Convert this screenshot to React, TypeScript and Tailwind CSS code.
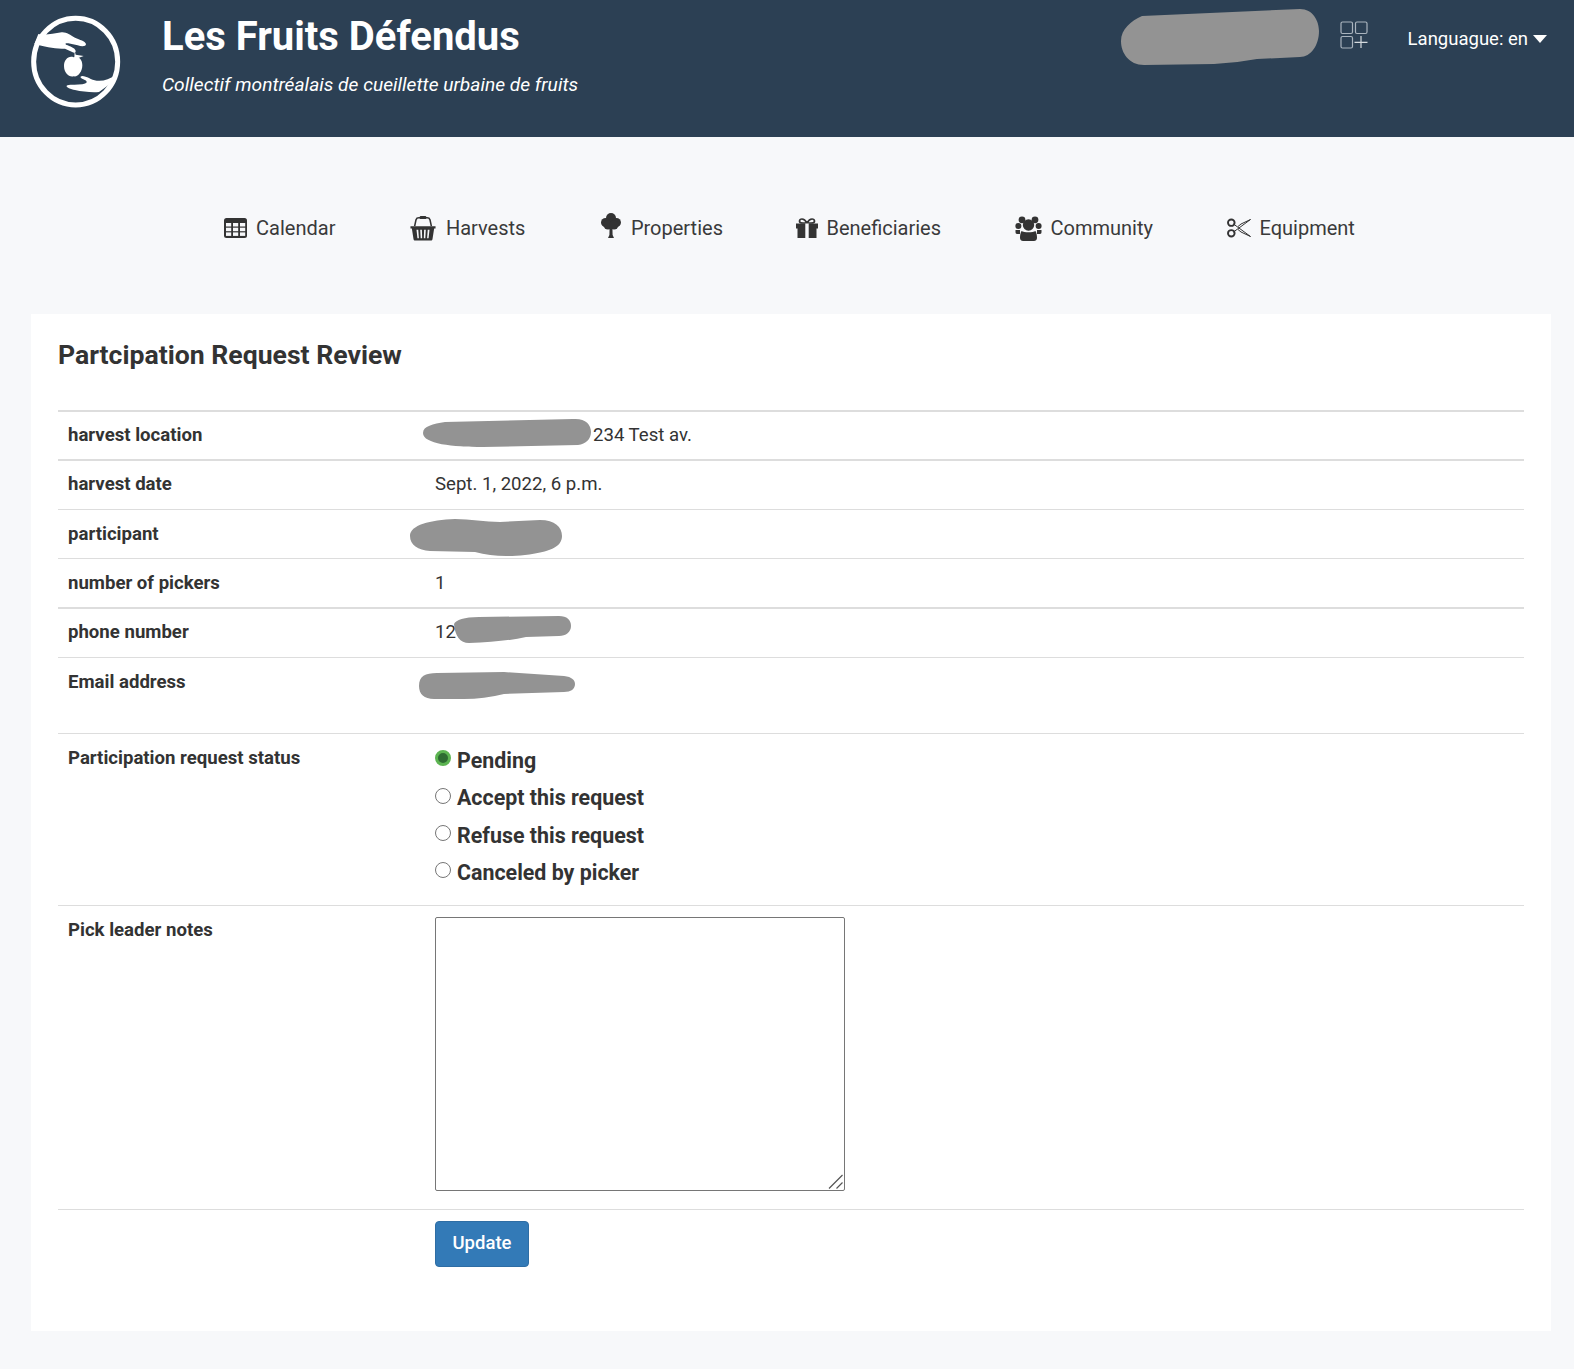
import React from "react";

function Blob({ d, w, h, className }: { d: string; w: number; h: number; className?: string }) {
  return (
    <svg viewBox={`0 0 ${w} ${h}`} width={w} height={h} className={className}>
      <path d={d} fill="#939393" />
    </svg>
  );
}

function Logo() {
  return (
    <svg viewBox="0 0 315 315" width={105} height={105} className="shrink-0">
      <ellipse cx="152" cy="155" rx="126" ry="130" fill="none" stroke="#fff" strokeWidth="15" />
      <path d="M40 72 C60 78 85 70 110 67 C125 66 135 75 150 83 C165 90 180 92 183 102 C183 110 170 110 158 106 L130 100 C120 98 118 102 128 106 C140 111 152 116 152 124 C152 130 146 128 140 125 L120 116 C90 118 60 110 28 102 Z" fill="#fff" />
      <path d="M149 122 L152 134 L176 138 L160 144 L148 143 Z" fill="#fff" />
      <path d="M146 142 C160 136 172 148 172 166 C172 186 158 202 146 199 C132 203 117 188 117 168 C117 150 130 136 146 142 Z" fill="#fff" />
      <path d="M172 198 C185 198 198 210 215 212 C235 214 255 208 270 194 L258 220 L222 246 C200 248 172 245 150 240 C138 237 122 232 125 227 C130 222 150 226 172 223 C190 220 188 213 175 208 C165 204 164 199 172 198 Z" fill="#fff" />
    </svg>
  );
}

function GridPlus() {
  return (
    <svg viewBox="0 0 28 28" width={28} height={28} fill="none" stroke="#aab4be" strokeWidth="1.2">
      <rect x="1" y="1" width="11.5" height="11.5" rx="1.5" />
      <rect x="15.5" y="1" width="11.5" height="11.5" rx="1.5" />
      <rect x="1" y="15.5" width="11.5" height="11.5" rx="1.5" />
      <path d="M21 15 V27 M14.5 21.3 H27.5" stroke="#d5dade" />
    </svg>
  );
}

function TableIcon() {
  const xs = [2, 9, 16];
  const ys = [5, 9.7, 14.4];
  return (
    <svg viewBox="0 0 23 20" width={23} height={20}>
      <rect width="23" height="20" rx="2.5" fill="#333" />
      {ys.flatMap((y) => xs.map((x) => <rect key={`${x}-${y}`} x={x} y={y} width="5.2" height="3.5" fill="#f7f8fa" />))}
    </svg>
  );
}

function Basket() {
  return (
    <svg viewBox="0 0 28 28" width={28} height={26} fill="#333">
      <path d="M5 12 L6.5 5 C7 3.5 8 3 9.5 3 H18.5 C20 3 21 3.5 21.5 5 L23 12" fill="none" stroke="#333" strokeWidth="1.7" />
      <rect x="10.5" y="1" width="7" height="3.4" rx="1" />
      <path fillRule="evenodd" d="M0.5 12 H27.5 V14.5 H26 L24.2 26 C24 27 23.5 27.5 22.5 27.5 H5.5 C4.5 27.5 4 27 3.8 26 L2 14.5 H0.5 Z M7 16 L8 25 H9.6 L8.9 16 Z M11 16 L11.5 25 H13.1 L12.8 16 Z M15.2 16 L14.9 25 H16.5 L17 16 Z M19.1 16 L18.4 25 H20 L21 16 Z" />
    </svg>
  );
}

function Tree() {
  return (
    <svg viewBox="0 0 20 25" width={20} height={25} fill="#333" className="-mt-[6px] ml-[2px] mr-[1px]">
      <circle cx="10" cy="5" r="5" />
      <circle cx="4.6" cy="9.5" r="4.6" />
      <circle cx="15.4" cy="9.5" r="4.6" />
      <circle cx="7" cy="12" r="4.5" />
      <circle cx="13" cy="12" r="4.5" />
      <path d="M8.6 14 H11.4 L11.6 22 L13 25 H7 L8.4 22 Z" />
    </svg>
  );
}

function Gift() {
  return (
    <svg viewBox="0 0 22 20" width={22} height={20} className="-mr-[1px]">
      <path d="M11 5 C9 1.5 7.5 1 6 1 C4.4 1 3.5 2 3.5 3.2 C3.5 4.5 5 5 7 5 H15 C17 5 18.5 4.5 18.5 3.2 C18.5 2 17.6 1 16 1 C14.5 1 13 1.5 11 5 Z" fill="none" stroke="#333" strokeWidth="1.7" />
      <path d="M0 5.5 H22 V10.5 H20.5 V20 H1.5 V10.5 H0 Z" fill="#333" />
      <rect x="9.3" y="5.5" width="3.4" height="14.5" fill="#f7f8fa" />
    </svg>
  );
}

function Users() {
  return (
    <svg viewBox="0 0 27 25" width={27} height={25} fill="#333">
      <circle cx="7" cy="3.8" r="3.4" />
      <circle cx="20" cy="3.8" r="3.4" />
      <circle cx="3.4" cy="10" r="3" />
      <circle cx="23.6" cy="10" r="3" />
      <circle cx="13.5" cy="9" r="5.7" />
      <path d="M0.5 14 H5 L5 18 H2 C1 18 0.5 17 0.5 16 Z M22 14 H26.5 V16 C26.5 17 26 18 25 18 H22 Z" />
      <path d="M6.5 15 C9 16.8 18 16.8 20.5 15 C21.7 17 22 20 22 22 C22 24 20.5 25 19 25 H8 C6.5 25 5 24 5 22 C5 20 5.3 17 6.5 15 Z" />
    </svg>
  );
}

function Scissors() {
  return (
    <svg viewBox="0 0 24 20" width={24} height={20} fill="none" stroke="#333">
      <ellipse cx="4.3" cy="4.7" rx="3.3" ry="3.2" strokeWidth="1.9" />
      <ellipse cx="4.3" cy="15.3" rx="3.3" ry="3.2" strokeWidth="1.9" />
      <path d="M6.5 6 L23.5 18.5 L14 14 L11 11.5 M6.5 14 L23.5 1.5 L14 6 L11 8.5" strokeWidth="1" strokeLinejoin="round" />
    </svg>
  );
}

function NavItem({ icon, label }: { icon: React.ReactNode; label: string }) {
  return (
    <div className="flex items-center gap-[9px]">
      {icon}
      <span className="text-[20px] leading-none text-[#3a3a3a]">{label}</span>
    </div>
  );
}

function Row({ label, h, children, thick }: { label: string; h: string; children?: React.ReactNode; thick?: boolean }) {
  const cell = thick ? "pt-[11px]" : "pt-[12px]";
  return (
    <div className={`grid grid-cols-[367px_1fr] ${thick ? "border-t-2" : "border-t"} border-[#dddddd] ${h}`}>
      <div className={`pl-[10px] ${cell} text-[18.6px] leading-[25px] font-bold text-[#333]`}>{label}</div>
      <div className={`relative pl-[10px] ${cell} text-[18.6px] leading-[25px] text-[#333]`}>{children}</div>
    </div>
  );
}

function Radio({ label, checked }: { label: string; checked?: boolean }) {
  return (
    <label className="flex h-[37.4px] items-center gap-[6px]">
      <input
        type="radio"
        name="status"
        defaultChecked={checked}
        className="m-0 -mt-[5px] h-4 w-4 appearance-none rounded-full border border-[#767676] bg-white checked:border-[3px] checked:border-[#5cb451] checked:bg-[#2e6b32]"
      />
      <span className="text-[21.4px] font-bold leading-none text-[#333]">{label}</span>
    </label>
  );
}

export default function App() {
  return (
    <div className="min-h-[1369px] bg-[#f7f8fa] font-['Roboto',sans-serif]">
      <header className="flex h-[137px] items-start bg-[#2c4054] pl-[25px] text-white">
        <div className="mt-[10px]"><Logo /></div>
        <div className="ml-[32px] flex flex-col">
          <h1 className="mt-[13px] text-[40px] font-bold leading-[48px]">Les Fruits Défendus</h1>
          <p className="mt-[12px] text-[19.2px] italic leading-[24px]">Collectif montréalais de cueillette urbaine de fruits</p>
        </div>
        <div className="ml-auto flex items-start">
          <Blob
            w={198}
            h={56}
            className="mt-[9px]"
            d="M0 32 C0 20 10 12 21 7 L179 0 C192 0 198 12 198 22 C198 36 190 48 179 48 L136 50 Q115 54 93 55 L23 56 C8 56 0 44 0 32Z"
          />
          <div className="ml-[21px] mt-[21px]"><GridPlus /></div>
          <div className="ml-[40px] mr-[27px] mt-[27px] flex items-center gap-[5px] text-[18.5px] leading-[24px]">
            <span>Languague: en</span>
            <span className="h-0 w-0 border-x-[7px] border-t-[8px] border-x-transparent border-t-white" />
          </div>
        </div>
      </header>

      <nav className="flex h-[177px] items-center justify-center gap-[73.5px] pl-[5px] pt-[5px]">
        <NavItem icon={<TableIcon />} label="Calendar" />
        <NavItem icon={<Basket />} label="Harvests" />
        <NavItem icon={<Tree />} label="Properties" />
        <NavItem icon={<Gift />} label="Beneficiaries" />
        <NavItem icon={<Users />} label="Community" />
        <NavItem icon={<Scissors />} label="Equipment" />
      </nav>

      <main className="ml-[31px] h-[1017px] w-[1520px] bg-white px-[27px] pt-[25px]">
        <h2 className="text-[26.6px] font-bold leading-[32px] text-[#333]">Partcipation Request Review</h2>
        <div className="mt-[39px] w-[1466px] border-b border-[#dddddd]">
          <Row label="harvest location" h="h-[49px]" thick>
            <span className="pl-[158px]">234 Test av.</span>
            <Blob
              w={168}
              h={29}
              className="absolute left-[-2px] top-[6px]"
              d="M0 15 C0 8 10 6 22 4 L150 1 C162 0 168 6 168 14 C168 21 163 26 155 27 L60 29 C30 29 0 26 0 15Z"
            />
          </Row>
          <Row label="harvest date" h="h-[50px]" thick>Sept. 1, 2022, 6 p.m.</Row>
          <Row label="participant" h="h-[49px]">
            <Blob
              w={152}
              h={37}
              className="absolute left-[-15px] top-[9px]"
              d="M0 17 C0 6 20 1 45 0 C60 0 75 3 90 3 L130 1 C145 1 152 8 152 17 C152 28 140 33 115 36 C95 38 80 37 65 33 L20 32 C8 31 0 26 0 17Z"
            />
          </Row>
          <Row label="number of pickers" h="h-[49px]">1</Row>
          <Row label="phone number" h="h-[50px]" thick>
            12
            <Blob
              w={117}
              h={27}
              className="absolute left-[29px] top-[7px]"
              d="M0 8 C2 4 10 1 25 1 L105 0 C113 0 117 4 117 10 C117 16 112 20 105 20 L72 21 Q50 26 15 27 C6 27 1 20 0 8Z"
            />
          </Row>
          <Row label="Email address" h="h-[76px]">
            <Blob
              w={156}
              h={27}
              className="absolute left-[-6px] top-[14px]"
              d="M0 14 C0 4 6 1 18 1 L85 0 L145 4 C153 5 156 8 156 12 C156 17 152 20 145 20 L85 22 Q65 27 45 27 L15 27 C5 27 0 22 0 14Z"
            />
          </Row>
          <Row label="Participation request status" h="h-[172px]">
            <div className="-mt-[4px] flex flex-col">
              <Radio label="Pending" checked />
              <Radio label="Accept this request" />
              <Radio label="Refuse this request" />
              <Radio label="Canceled by picker" />
            </div>
          </Row>
          <Row label="Pick leader notes" h="h-[304px]">
            <div className="relative -mt-[1px] h-[274px] w-[410px]">
              <textarea className="block h-full w-full resize-none rounded-[2px] border border-[#767676] bg-white outline-none" />
              <svg viewBox="0 0 15 15" width={15} height={15} className="absolute bottom-[2px] right-[2px]" stroke="#555" strokeWidth="1.2">
                <path d="M1 14.5 L14.5 1 M8.5 14.5 L14.5 8.5" />
              </svg>
            </div>
          </Row>
        </div>
        <div className="pl-[377px] pt-[11px]">
          <button className="h-[46px] w-[94px] rounded-[4px] border border-[#2e6da4] bg-[#337ab7] text-[18.5px] font-medium text-white">
            Update
          </button>
        </div>
      </main>
    </div>
  );
}
